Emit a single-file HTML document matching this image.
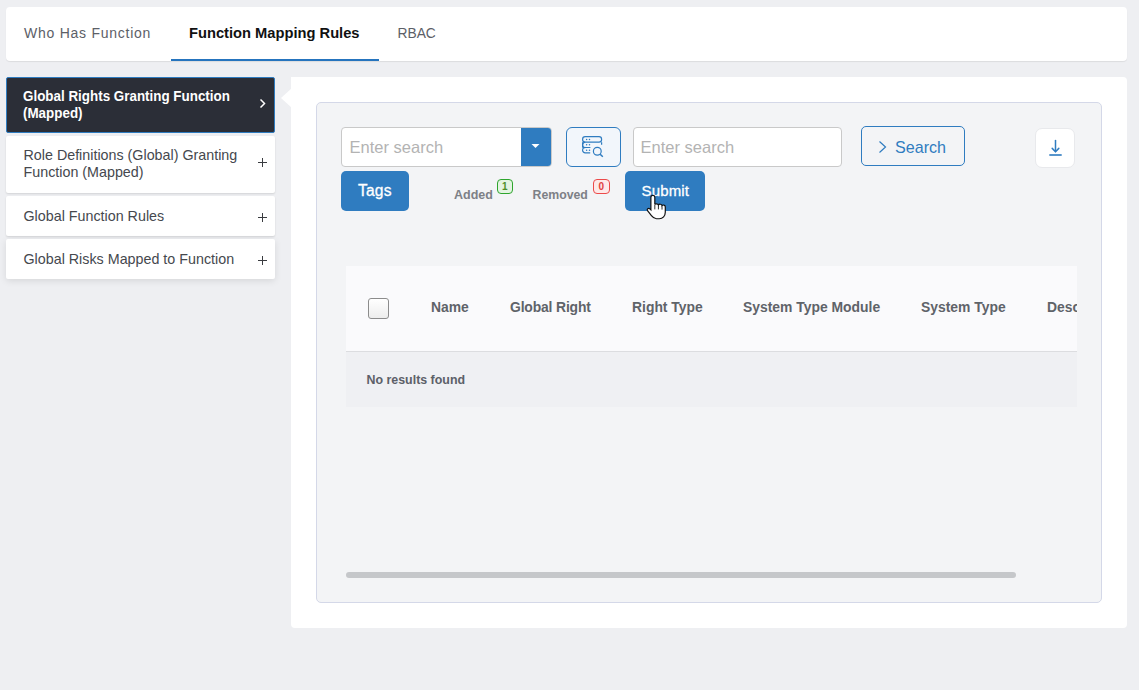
<!DOCTYPE html>
<html><head><meta charset="utf-8">
<style>
*{box-sizing:border-box;margin:0;padding:0}
html,body{width:1139px;height:690px;overflow:hidden;background:#eeeff2;font-family:"Liberation Sans",sans-serif}
.a{position:absolute}
.t{position:absolute;white-space:nowrap;line-height:1}
.card{position:absolute;background:#fff;border-radius:4px}
.side{position:absolute;left:6px;width:269px;background:#fff;border-radius:2px;box-shadow:0 1px 2px rgba(0,0,0,.12)}
.plus{position:absolute;left:258px;width:9px;height:9px}
.plus:before,.plus:after{content:"";position:absolute;background:#3a3c40}
.plus:before{left:0;top:4px;width:9px;height:1.4px}
.plus:after{left:3.8px;top:0;width:1.4px;height:9px}
.hd{font-weight:700;color:#5f6369;font-size:14px}
</style></head><body>

<!-- tab bar -->
<div class="card" style="left:6px;top:7px;width:1121px;height:54px;box-shadow:0 1px 1px rgba(0,0,0,.08)"></div>
<div class="t" style="left:24px;top:26px;font-size:14px;letter-spacing:0.75px;color:#5c6067">Who Has Function</div>
<div class="t" style="left:189px;top:26px;font-size:14.7px;font-weight:700;color:#111">Function Mapping Rules</div>
<div class="a" style="left:171px;top:59px;width:208px;height:2px;background:#2574be"></div>
<div class="t" style="left:397.5px;top:27px;font-size:13.8px;color:#5c6067">RBAC</div>

<!-- sidebar -->
<div class="a" style="left:6px;top:77px;width:269px;height:56px;background:#2b2e37;border:1px solid #2f7cc0;border-radius:2px"></div>
<div class="t" style="left:23px;top:88.2px;font-size:14.5px;font-weight:700;color:#fff;line-height:17px;transform:scaleX(0.924);transform-origin:0 0">Global Rights Granting Function<br>(Mapped)</div>
<svg class="a" style="left:258px;top:97px" width="10" height="13" viewBox="0 0 10 13"><path d="M2.5 2.5 L6.5 6.5 L2.5 10.5" fill="none" stroke="#fff" stroke-width="1.5"/></svg>

<div class="side" style="top:136px;height:56.5px"></div>
<div class="t" style="left:23.5px;top:147px;font-size:14.3px;color:#45484e;line-height:16.7px">Role Definitions (Global) Granting<br>Function (Mapped)</div>
<div class="plus" style="top:158px"></div>

<div class="side" style="top:196px;height:40px"></div>
<div class="t" style="left:23.5px;top:209px;font-size:14.3px;color:#45484e">Global Function Rules</div>
<div class="plus" style="top:212.5px"></div>

<div class="side" style="top:239px;height:40px;box-shadow:0 2px 7px rgba(0,0,0,.1)"></div>
<div class="t" style="left:23.5px;top:252px;font-size:14.3px;color:#45484e">Global Risks Mapped to Function</div>
<div class="plus" style="top:255.5px"></div>

<!-- content panel -->
<div class="card" style="left:291px;top:77px;width:836px;height:551px;border-radius:0 4px 4px 4px"></div>
<svg class="a" style="left:280px;top:87px" width="12" height="22" viewBox="0 0 12 22"><path d="M12 1 L1 11 L12 21 Z" fill="#fff"/></svg>

<div class="a" style="left:316px;top:102px;width:786px;height:501px;background:#f3f4f6;border:1px solid #d4d8e8;border-radius:5px"></div>

<!-- row 1 -->
<div class="a" style="left:341px;top:127px;width:211px;height:40px;background:#fff;border:1px solid #c9c9c9;border-radius:4px;overflow:hidden">
  <div class="a" style="left:178.5px;top:-1px;width:32px;height:40px;background:#2f7cc0"></div>
</div>
<svg class="a" style="left:531px;top:143px" width="9" height="6" viewBox="0 0 9 6"><path d="M0.5 1 L8.5 1 L4.5 5 Z" fill="#fff"/></svg>
<div class="t" style="left:349.6px;top:139px;font-size:16.5px;color:#b3b3b3">Enter search</div>

<div class="a" style="left:566px;top:127px;width:55px;height:40px;background:#f2f6fb;border:1px solid #2f7cc0;border-radius:6px"></div>
<svg class="a" style="left:576px;top:130px" width="32" height="32" viewBox="0 0 32 32">
 <g fill="none" stroke="#2f7cc0" stroke-width="1.2">
  <rect x="6.6" y="6.6" width="19" height="5.6" rx="2.6"/>
  <path d="M25.6 12.2 v2.6 M6.6 12.2 v5.4 M6.6 17.5 h7.8"/>
  <path d="M9.2 17.4 a2.6 2.6 0 0 0 -2.6 2.6 v0.2 a2.6 2.6 0 0 0 2.6 2.6 h5"/>
  <path d="M9.2 12.2 a2.6 2.6 0 0 0 -2.6 2.6 v0.2 a2.6 2.6 0 0 0 2.6 2.6"/>
  <circle cx="21.3" cy="21.3" r="3.9"/>
  <path d="M24.2 24.2 L26.8 26.8" stroke-width="1.5"/>
 </g>
 <g fill="#2f7cc0">
  <circle cx="10.6" cy="9.5" r="0.75"/><circle cx="13.5" cy="9.5" r="0.75"/>
  <circle cx="10.6" cy="14.7" r="0.75"/><circle cx="13.5" cy="14.7" r="0.75"/>
  <circle cx="10.6" cy="20.2" r="0.75"/><circle cx="13.5" cy="20.2" r="0.75"/>
 </g>
</svg>

<div class="a" style="left:633px;top:127px;width:209px;height:40px;background:#fff;border:1px solid #c9c9c9;border-radius:4px"></div>
<div class="t" style="left:640.6px;top:139px;font-size:16.5px;color:#b3b3b3">Enter search</div>

<div class="a" style="left:861px;top:126px;width:104px;height:40px;border:1px solid #2f7cc0;border-radius:5px"></div>
<svg class="a" style="left:877px;top:139px" width="12" height="16" viewBox="0 0 12 16"><path d="M2.5 2.5 L8.5 8 L2.5 13.5" fill="none" stroke="#2f7cc0" stroke-width="1.2"/></svg>
<div class="t" style="left:895px;top:139px;font-size:16.1px;color:#2f7cc0">Search</div>

<div class="a" style="left:1035px;top:128px;width:40px;height:40px;background:#fff;border:1px solid #e8e9ec;border-radius:7px"></div>
<svg class="a" style="left:1045px;top:137px" width="20" height="22" viewBox="0 0 20 22">
 <g fill="none" stroke="#2f7cc0" stroke-width="1.5" stroke-linecap="round">
  <path d="M10.5 3.5 V14.5"/><path d="M7.2 11.4 L10.5 14.7 L13.8 11.4"/>
 </g>
 <rect x="4.3" y="17.2" width="12.4" height="1.6" fill="#2f7cc0"/>
</svg>

<!-- row 2 -->
<div class="a" style="left:341px;top:171px;width:68px;height:40px;background:#2f7cc0;border-radius:5px"></div>
<div class="t" style="left:358px;top:182.6px;font-size:15.6px;letter-spacing:0.2px;color:#fff;-webkit-text-stroke:0.3px #fff">Tags</div>

<div class="t" style="left:454px;top:189px;font-size:12.5px;font-weight:700;color:#7d8086">Added</div>
<div class="a" style="left:497px;top:179px;width:16px;height:15px;background:#e4f4e2;border:1px solid #2ea52e;border-radius:4px"></div>
<div class="t" style="left:502px;top:182px;font-size:10px;font-weight:700;color:#4f8f2a">1</div>
<div class="t" style="left:532.5px;top:189px;font-size:12.3px;font-weight:700;color:#7d8086">Removed</div>
<div class="a" style="left:593px;top:179px;width:17px;height:15px;background:#fde9e9;border:1px solid #ec4a4a;border-radius:4px"></div>
<div class="t" style="left:598.5px;top:182px;font-size:10px;font-weight:700;color:#e04040">0</div>

<div class="a" style="left:625px;top:171px;width:80px;height:40px;background:#2f7cc0;border-radius:5px"></div>
<div class="t" style="left:641.5px;top:182.8px;font-size:15px;letter-spacing:0.15px;color:#fff;-webkit-text-stroke:0.3px #fff">Submit</div>

<!-- table -->
<div class="a" style="left:346px;top:266px;width:731px;height:85px;background:#fafafc"></div>
<div class="a" style="left:346px;top:351px;width:731px;height:1px;background:#dcdde0"></div>
<div class="a" style="left:346px;top:352px;width:731px;height:55px;background:#eff0f3"></div>
<div class="a" style="left:368px;top:298px;width:21px;height:21px;border:1px solid #8c8c8c;border-radius:3px;background:linear-gradient(#fff,#ededed)"></div>
<div class="t hd" style="left:431px;top:301px;font-size:13.9px">Name</div>
<div class="t hd" style="left:510px;top:301px;font-size:13.9px;letter-spacing:-0.15px">Global Right</div>
<div class="t hd" style="left:632px;top:301px;font-size:13.9px">Right Type</div>
<div class="t hd" style="left:743px;top:301px;font-size:13.9px">System Type Module</div>
<div class="t hd" style="left:921px;top:301px;font-size:13.9px">System Type</div>
<div class="a" style="left:1047px;top:290px;width:30px;height:30px;overflow:hidden"><div class="t hd" style="left:0;top:11px;font-size:13.9px">Desc</div></div>
<div class="t" style="left:366.5px;top:374px;font-size:12.42px;font-weight:700;color:#5c6068">No results found</div>

<div class="a" style="left:346px;top:572px;width:670px;height:6px;background:#c5c7ca;border-radius:3px"></div>

<!-- cursor -->
<svg class="a" style="left:645px;top:193px" width="24" height="28.4" viewBox="0 0 22 26">
 <path d="M7.2 2.2 c1.1 0 1.8 0.8 1.8 1.8 v6.6 c0.3-1.0 2.9-1.0 3.3 0.4 c0.5-1.1 3.0-1.0 3.3 0.6 c0.6-1.0 3.0-0.7 3.0 1.0 v5.0 c0 3.2-2.3 6.0-5.5 6.0 h-2.6 c-2.2 0-3.3-1.1-4.6-2.8 l-3.6-4.7 c-0.9-1.2 0.8-2.7 2.1-1.6 l1.0 0.9 V4 c0-1 0.8-1.8 1.8-1.8 z" fill="#fff" stroke="#111" stroke-width="1.1"/>
 <path d="M12.3 11.5 v3.5 M15.6 12.2 v3 M9 11 v4" fill="none" stroke="#111" stroke-width="0.8"/>
</svg>

</body></html>
